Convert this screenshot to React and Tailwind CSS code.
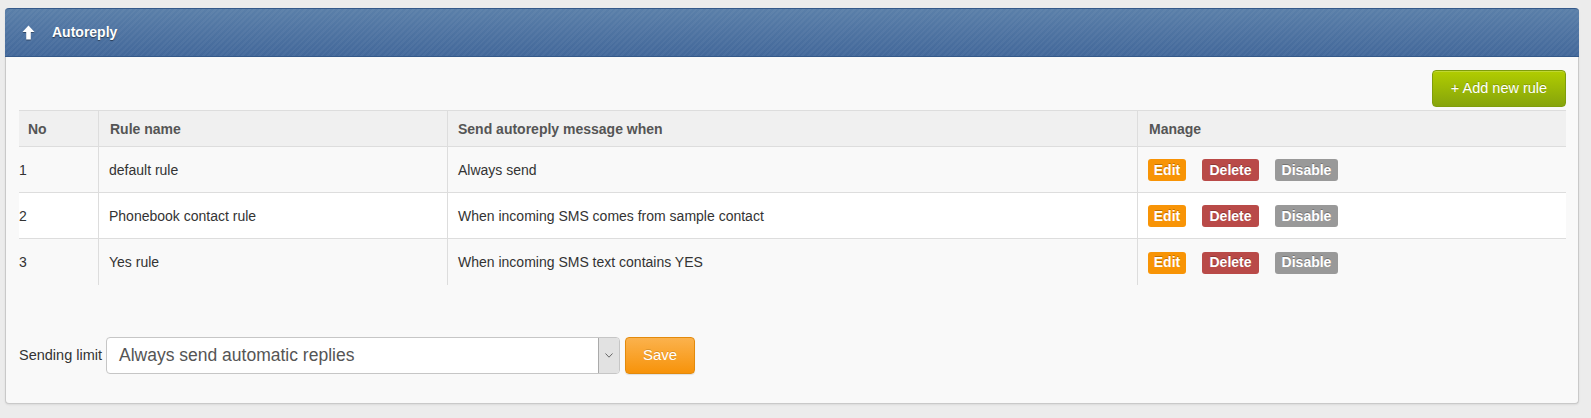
import React from 'react'

const rules = [
  { no: 1, name: 'default rule', when: 'Always send', bg: 'bg-[#f9f9f9]' },
  { no: 2, name: 'Phonebook contact rule', when: 'When incoming SMS comes from sample contact', bg: 'bg-white' },
  { no: 3, name: 'Yes rule', when: 'When incoming SMS text contains YES', bg: 'bg-[#f9f9f9]' },
]

function UpArrow() {
  return (
    <svg width="13" height="15" viewBox="0 0 13 15" className="drop-shadow-[0_1px_0_rgba(0,0,0,0.35)]">
      <path d="M6.5 0.5 L12.5 7 L8.8 7 L8.8 14.5 L4.2 14.5 L4.2 7 L0.5 7 Z" fill="#fff" />
    </svg>
  )
}

function Label({ children, color, width }) {
  return (
    <span
      className={`inline-flex items-center justify-center h-[22px] rounded-[3px] text-[14px] font-bold text-white [text-shadow:0_-1px_0_rgba(0,0,0,0.25)] ${color} ${width}`}
    >
      {children}
    </span>
  )
}

export default function App() {
  return (
    <div className="min-h-[418px] bg-[#ececec] pt-2 pl-[5px] pr-3 font-['Liberation_Sans',Arial,sans-serif]">
      <div className="h-[396px] rounded-[4px] border-x border-b border-[#c9c9c9] bg-[#f9f9f9] shadow-[0_1px_2px_rgba(0,0,0,0.08)]">
        {/* Panel header */}
        <div className="-mx-px flex h-[49px] items-center gap-[17px] rounded-t-[4px] border-t border-b border-[#34598a] bg-[repeating-linear-gradient(135deg,rgba(255,255,255,0.04)_0px,rgba(255,255,255,0.04)_2px,transparent_2px,transparent_4px),linear-gradient(#5a7fa9,#43689a)] pl-[17px]">
          <UpArrow />
          <span className="text-[14px] font-bold text-white [text-shadow:0_1px_1px_rgba(0,0,0,0.5)]">Autoreply</span>
        </div>

        <div className="pl-[13px] pr-3 pt-[13px]">
          <div className="flex justify-end">
            <button
              type="button"
              className="h-[37px] w-[134px] rounded-[4px] border border-[#7f9d0b] bg-[linear-gradient(#b1cd00,#86a40c)] text-[14.5px] text-white [text-shadow:0_-1px_0_rgba(0,0,0,0.2)] shadow-[inset_0_1px_0_rgba(255,255,255,0.2)]"
            >
              + Add new rule
            </button>
          </div>

          {/* Rules table */}
          <div className="mt-[3px] text-[14px]">
            <div className="flex h-[37px] border-y border-[#dddddd] bg-[#f0f0f0] font-bold text-[#555]">
              <div className="flex w-[79px] items-center pl-[9px] pt-px">No</div>
              <div className="flex w-[349px] items-center border-l border-[#dddddd] pl-[11px] pt-px">Rule name</div>
              <div className="flex w-[690px] items-center border-l border-[#dddddd] pl-[10px] pt-px">Send autoreply message when</div>
              <div className="flex flex-1 items-center border-l border-[#dddddd] pl-[11px] pt-px">Manage</div>
            </div>
            {rules.map((r, i) => (
              <div
                key={r.no}
                className={`flex h-[46px] text-[#333] ${r.bg} ${i < rules.length - 1 ? 'border-b border-[#dddddd]' : 'h-[45px]'}`}
              >
                <div className="flex w-[79px] items-center pt-px">{r.no}</div>
                <div className="flex w-[349px] items-center border-l border-[#dddddd] pl-[10px] pt-px">{r.name}</div>
                <div className="flex w-[690px] items-center border-l border-[#dddddd] pl-[10px] pt-px">{r.when}</div>
                <div className="flex flex-1 items-center gap-[16px] border-l border-[#dddddd] pl-[10px] pt-px">
                  <Label color="bg-[#f89406]" width="w-[38px]">Edit</Label>
                  <Label color="bg-[#b94a48]" width="w-[57px]">Delete</Label>
                  <Label color="bg-[#999999]" width="w-[63px]">Disable</Label>
                </div>
              </div>
            ))}
          </div>

          {/* Sending limit */}
          <div className="mt-[52px] flex items-center">
            <span className="w-[87px] text-[14.5px] text-[#333]">Sending limit</span>
            <div className="flex h-[37px] w-[514px] items-stretch overflow-hidden rounded-[4px] border border-[#c6c6c6] bg-white">
              <div className="flex flex-1 items-center pl-[12px] text-[17.5px] text-[#555]">Always send automatic replies</div>
              <div className="flex w-[21px] items-center justify-center border-l border-[#aaaaaa] bg-[#e2e2e2]">
                <svg width="8" height="5" viewBox="0 0 8 5">
                  <path d="M0.5 0.5 L4 4.2 L7.5 0.5" fill="none" stroke="#666" strokeWidth="1" />
                </svg>
              </div>
            </div>
            <button
              type="button"
              className="ml-[5px] h-[37px] w-[70px] rounded-[4px] border border-[#e38a0c] bg-[linear-gradient(#fbb24d,#f7930a)] text-[15px] text-white [text-shadow:0_-1px_0_rgba(0,0,0,0.15)] shadow-[0_1px_1px_rgba(0,0,0,0.1)]"
            >
              Save
            </button>
          </div>
        </div>
      </div>
    </div>
  )
}
